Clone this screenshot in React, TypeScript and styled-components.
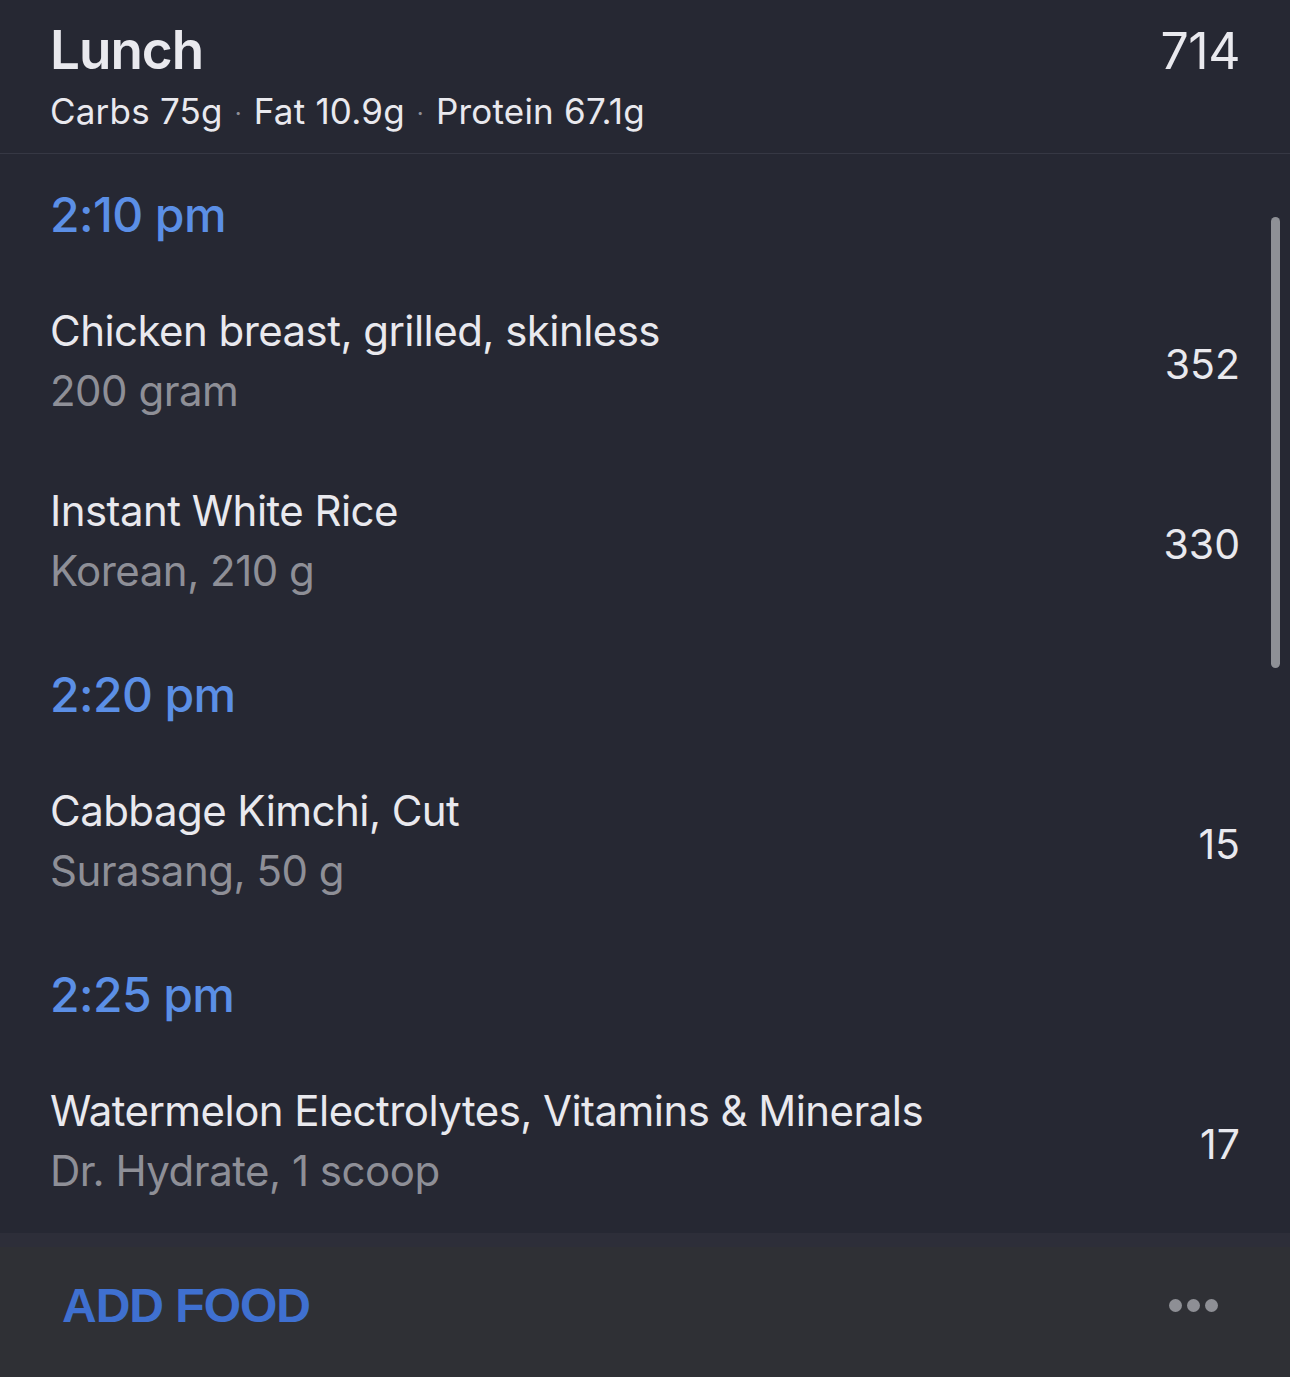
import styled, { createGlobalStyle } from "styled-components"

const GlobalStyle = createGlobalStyle`
    html, body {
        margin: 0;
        padding: 0;
        background: #262833;
    }
    * {
        box-sizing: border-box;
    }
`

const colors = {
    bg: "#262833",
    footer: "#2f3035",
    text: "#e9e9ee",
    gray: "#8e8f97",
    blue: "#5b8fe6",
    addBlue: "#3f70d0",
    line: "#363844",
}

const Screen = styled.div`
    width: 1290px;
    height: 1377px;
    display: flex;
    flex-direction: column;
    background: ${colors.bg};
    font-family: Inter, "Noto Sans", sans-serif;
    color: ${colors.text};
`

const Header = styled.header`
    height: 154px;
    padding: 20px 50px 0 50px;
    border-bottom: 1px solid ${colors.line};
`

const TitleRow = styled.div`
    display: flex;
    justify-content: space-between;
    align-items: baseline;
    line-height: 60px;
`

const Title = styled.h1`
    margin: 0;
    font-size: 53px;
    font-weight: 600;
    letter-spacing: -1px;
`

const Total = styled.span`
    font-size: 50px;
    font-weight: 400;
    letter-spacing: -0.5px;
`

const Macros = styled.div`
    margin-top: 8px;
    font-size: 35px;
    line-height: 44px;
    letter-spacing: 0.2px;

    span {
        margin: 0 12px;
        color: ${colors.gray};
        font-size: 24px;
        vertical-align: middle;
    }
`

const List = styled.div`
    flex: 1;
    position: relative;
    overflow: hidden;
`

const Scrollbar = styled.div`
    position: absolute;
    top: 63px;
    right: 10px;
    width: 9px;
    height: 451px;
    border-radius: 5px;
    background: #8e9096;
`

const TimeRow = styled.div`
    height: 120px;
    padding: 0 50px;
    display: flex;
    align-items: center;
    font-size: 48px;
    font-weight: 500;
    letter-spacing: -0.6px;
    color: ${colors.blue};
`

const ItemRow = styled.div`
    height: 180px;
    padding: 0 50px;
    display: flex;
    align-items: center;
    justify-content: space-between;
`

const ItemText = styled.div`
    display: flex;
    flex-direction: column;
    margin-top: -6px;
`

const ItemName = styled.div`
    font-size: 42px;
    line-height: 60px;
    letter-spacing: -0.55px;
`

const ItemSub = styled.div`
    font-size: 42px;
    line-height: 60px;
    letter-spacing: -0.5px;
    color: ${colors.gray};
`

const Calories = styled.div`
    font-size: 41px;
`

const Footer = styled.footer`
    height: 144px;
    padding: 0 72px 0 62px;
    display: flex;
    align-items: center;
    justify-content: space-between;
    background: linear-gradient(to bottom, #2d2e39 0px, #2d2e39 14px, ${colors.footer} 14px);
`

const AddButton = styled.button`
    padding: 0;
    border: none;
    background: transparent;
    font-family: "Liberation Sans", Arial, sans-serif;
    font-size: 48px;
    font-weight: 700;
    letter-spacing: -1px;
    color: ${colors.addBlue};
    cursor: pointer;
`

const Dots = styled.div`
    display: flex;
    gap: 5px;

    i {
        width: 13px;
        height: 13px;
        border-radius: 50%;
        background: #8e8f95;
    }
`

type Food = { name: string; sub: string; cal: number }
type Group = { time: string; foods: Food[] }

const groups: Group[] = [
    {
        time: "2:10 pm",
        foods: [
            { name: "Chicken breast, grilled, skinless", sub: "200 gram", cal: 352 },
            { name: "Instant White Rice", sub: "Korean, 210 g", cal: 330 },
        ],
    },
    {
        time: "2:20 pm",
        foods: [{ name: "Cabbage Kimchi, Cut", sub: "Surasang, 50 g", cal: 15 }],
    },
    {
        time: "2:25 pm",
        foods: [{ name: "Watermelon Electrolytes, Vitamins & Minerals", sub: "Dr. Hydrate, 1 scoop", cal: 17 }],
    },
]

const App = () => {
    return (
        <Screen>
            <GlobalStyle />
            <Header>
                <TitleRow>
                    <Title>Lunch</Title>
                    <Total>714</Total>
                </TitleRow>
                <Macros>
                    Carbs 75g<span>·</span>Fat 10.9g<span>·</span>Protein 67.1g
                </Macros>
            </Header>
            <List>
                {groups.map((group) => (
                    <div key={group.time}>
                        <TimeRow>{group.time}</TimeRow>
                        {group.foods.map((food) => (
                            <ItemRow key={food.name}>
                                <ItemText>
                                    <ItemName>{food.name}</ItemName>
                                    <ItemSub>{food.sub}</ItemSub>
                                </ItemText>
                                <Calories>{food.cal}</Calories>
                            </ItemRow>
                        ))}
                    </div>
                ))}
                <Scrollbar />
            </List>
            <Footer>
                <AddButton>ADD FOOD</AddButton>
                <Dots>
                    <i />
                    <i />
                    <i />
                </Dots>
            </Footer>
        </Screen>
    )
}

export default App
